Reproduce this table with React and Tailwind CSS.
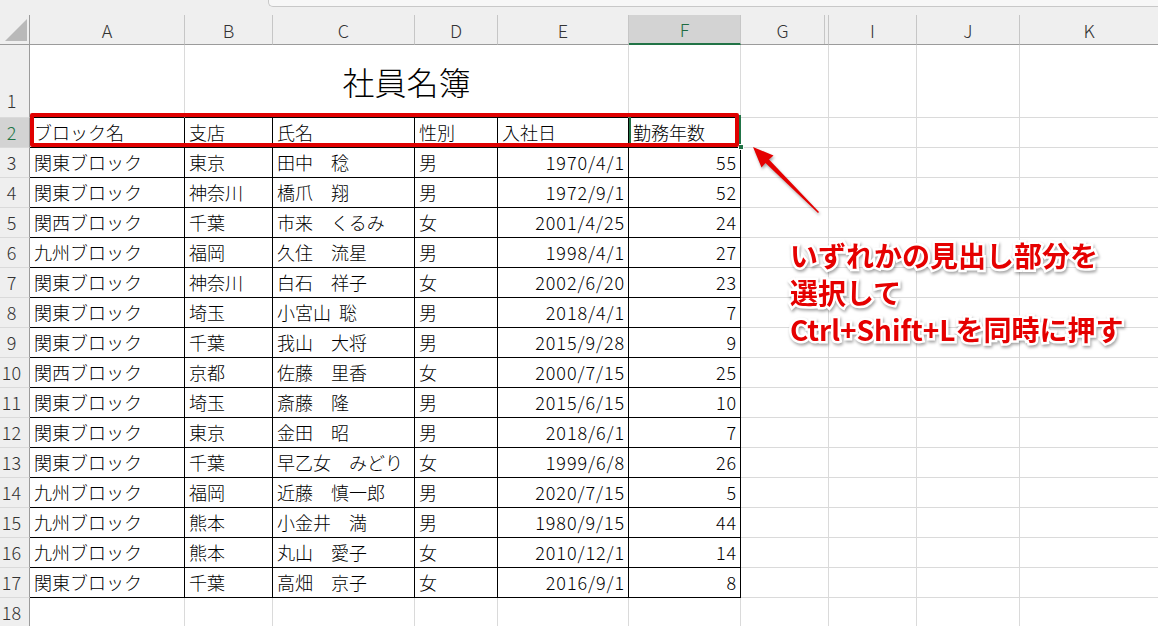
import React from "react";

const rows = [
  ["関東ブロック", "東京", "田中　稔", "男", "1970/4/1", "55"],
  ["関東ブロック", "神奈川", "橋爪　翔", "男", "1972/9/1", "52"],
  ["関西ブロック", "千葉", "市来　くるみ", "女", "2001/4/25", "24"],
  ["九州ブロック", "福岡", "久住　流星", "男", "1998/4/1", "27"],
  ["関東ブロック", "神奈川", "白石　祥子", "女", "2002/6/20", "23"],
  ["関東ブロック", "埼玉", "小宮山  聡", "男", "2018/4/1", "7"],
  ["関東ブロック", "千葉", "我山　大将", "男", "2015/9/28", "9"],
  ["関西ブロック", "京都", "佐藤　里香", "女", "2000/7/15", "25"],
  ["関東ブロック", "埼玉", "斎藤　隆", "男", "2015/6/15", "10"],
  ["関東ブロック", "東京", "金田　昭", "男", "2018/6/1", "7"],
  ["関東ブロック", "千葉", "早乙女　みどり", "女", "1999/6/8", "26"],
  ["九州ブロック", "福岡", "近藤　慎一郎", "男", "2020/7/15", "5"],
  ["九州ブロック", "熊本", "小金井　満", "男", "1980/9/15", "44"],
  ["九州ブロック", "熊本", "丸山　愛子", "女", "2010/12/1", "14"],
  ["関東ブロック", "千葉", "高畑　京子", "女", "2016/9/1", "8"],
];

const GRID =
  "grid grid-cols-[30px_155px_88px_142px_83px_131px_112px_88px_88px_103px_1fr]";

function RowHead({ n, active, bottom }) {
  return (
    <div
      className={
        "flex justify-center pr-[6px] border-r border-b border-r-[#9b9b9b] border-b-[#dadada] text-[18px] font-light leading-none " +
        (bottom ? "items-end pb-[8px] " : "items-center pb-[2px] ") +
        (active ? "bg-[#d3d3d3] text-[#217346]" : "bg-[#efefef] text-[#333]")
      }
    >
      {n}
    </div>
  );
}

function Empty({ black }) {
  return (
    <div
      className={
        "border-r border-b " +
        (black ? "border-r-[#dadada] border-b-black" : "border-[#dadada]")
      }
    />
  );
}

function TCell({ children, right }) {
  return (
    <div
      className={
        "flex items-center pb-[2px] border-r border-b border-black text-[18px] font-light leading-none text-black whitespace-pre overflow-hidden " +
        (right ? "justify-end pr-[3px] tracking-[0.9px]" : "pl-[4px]")
      }
    >
      {children}
    </div>
  );
}

function GridTail() {
  return (
    <>
      <div className="border-r border-b border-[#dadada]" />
      <div className="border-r border-b border-[#dadada]" />
      <div className="border-r border-b border-[#dadada]" />
      <div className="border-b border-[#dadada]" />
    </>
  );
}

export default function App() {
  const colHeads = ["A", "B", "C", "D", "E"];
  return (
    <div className="relative w-[1158px] h-[626px] overflow-hidden bg-white font-['Noto_Sans_CJK_JP',sans-serif]">
      {/* top strip with formula bar edge */}
      <div className="flex h-[15px] bg-[#efefef]">
        <div className="w-[268px]" />
        <div className="flex-1 h-[7px] bg-[#f7f7f7] border-l border-b border-[#c8c8c8] rounded-bl-[5px]" />
      </div>

      {/* column header */}
      <div className={GRID + " h-[30px] bg-[#efefef] text-[18px] font-light leading-none text-[#333]"}>
        <div className="relative border-r border-b border-[#9b9b9b]">
          <svg className="absolute left-0 top-0" width="30" height="29" viewBox="0 0 30 29">
            <polygon points="5,26 27,26 27,4" fill="#b9b9b9" />
          </svg>
        </div>
        {colHeads.map((c) => (
          <div
            key={c}
            className="flex items-center justify-center border-b border-b-[#9b9b9b] border-r border-r-[#c6c6c6]"
          >
            {c}
          </div>
        ))}
        <div className="flex items-center justify-center bg-[#d3d3d3] text-[#1e6b41] border-b-2 border-b-[#217346] border-r border-r-[#c6c6c6]">
          F
        </div>
        <div className="flex border-b border-b-[#9b9b9b] border-r border-r-[#c6c6c6]">
          <div className="flex flex-1 items-center justify-center border-r border-[#c6c6c6]">G</div>
          <div className="w-[3px]" />
        </div>
        <div className="flex items-center justify-center border-b border-b-[#9b9b9b] border-r border-r-[#c6c6c6]">
          I
        </div>
        <div className="flex items-center justify-center border-b border-b-[#9b9b9b] border-r border-r-[#c6c6c6]">
          J
        </div>
        <div className="flex items-center justify-center border-b border-b-[#9b9b9b]">K</div>
      </div>

      {/* row 1 with merged title */}
      <div className={GRID + " h-[73px]"}>
        <RowHead n="1" bottom />
        <Empty black />
        <div className="col-span-4 flex items-center justify-center border-r border-b border-r-[#dadada] border-b-black text-[32px] font-light leading-none text-black">
          社員名簿
        </div>
        <Empty black />
        <GridTail />
      </div>

      {/* row 2 headings */}
      <div className={GRID + " h-[30px]"}>
        <RowHead n="2" active />
        <TCell>ブロック名</TCell>
        <TCell>支店</TCell>
        <TCell>氏名</TCell>
        <TCell>性別</TCell>
        <TCell>入社日</TCell>
        <TCell>勤務年数</TCell>
        <GridTail />
      </div>

      {rows.map((r, i) => (
        <div key={i} className={GRID + " h-[30px]"}>
          <RowHead n={String(i + 3)} />
          <TCell>{r[0]}</TCell>
          <TCell>{r[1]}</TCell>
          <TCell>{r[2]}</TCell>
          <TCell>{r[3]}</TCell>
          <TCell right>{r[4]}</TCell>
          <TCell right>{r[5]}</TCell>
          <GridTail />
        </div>
      ))}

      {/* row 18 */}
      <div className={GRID + " h-[30px]"}>
        <RowHead n="18" />
        <Empty />
        <Empty />
        <Empty />
        <Empty />
        <Empty />
        <Empty />
        <GridTail />
      </div>

      {/* selection of F2 */}
      <div className="absolute left-[629px] top-[116px] w-[2px] h-[31px] bg-[#217346]" />
      <div className="absolute left-[739px] top-[115px] w-[2px] h-[31px] bg-[#217346]" />
      <div className="absolute left-[738px] top-[144px] w-[6px] h-[6px] bg-[#217346] border border-white" />

      {/* red highlight box */}
      <div className="absolute left-[30px] top-[113px] w-[709px] h-[34px] border-4 border-[#e00000] rounded-[2px]" />

      {/* arrow */}
      <svg
        className="absolute left-[740px] top-[140px] [filter:drop-shadow(1px_2px_1.5px_rgba(0,0,0,0.35))]"
        width="90"
        height="80"
        viewBox="0 0 90 80"
      >
        <polygon
          points="13,7 33.5,15.5 29,19.5 79,72 78,73 25.5,23 21.5,27.5"
          fill="#e50000"
        />
      </svg>

      {/* annotation */}
      <div className="absolute left-[790px] top-[237px] text-[28px] leading-[37px] font-bold text-[#e50000] whitespace-nowrap [paint-order:stroke_fill] [-webkit-text-stroke:5px_#ffffff] [filter:drop-shadow(1px_2px_1.5px_rgba(0,0,0,0.35))]">
        <div>いずれかの見出し部分を</div>
        <div>選択して</div>
        <div>Ctrl+Shift+Lを同時に押す</div>
      </div>
    </div>
  );
}
